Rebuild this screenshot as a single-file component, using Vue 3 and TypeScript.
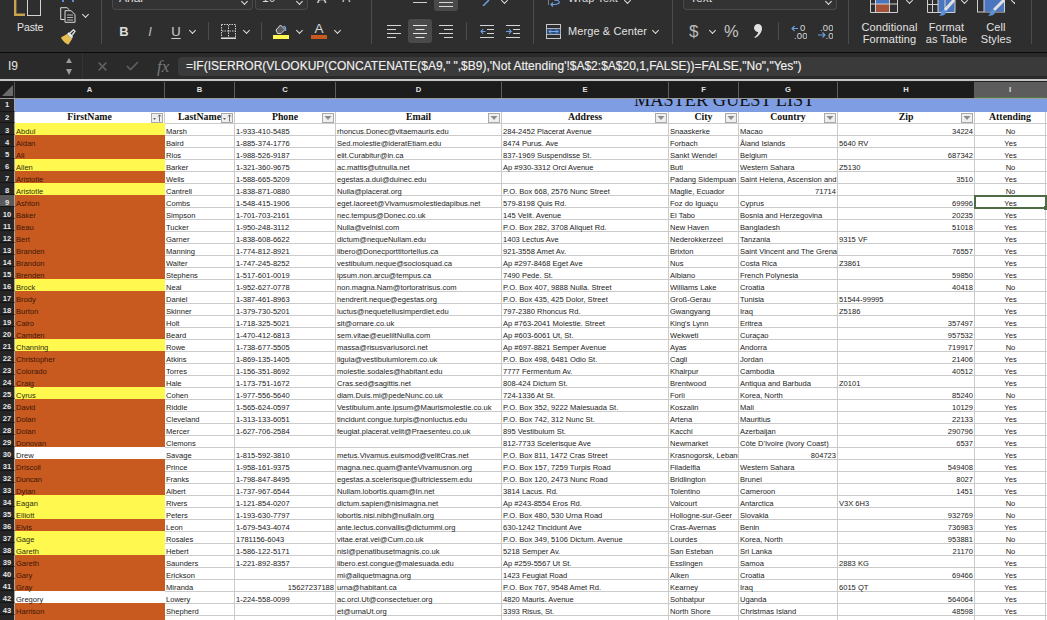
<script setup lang="ts">
type Fill = 'o' | 'y' | 'w'
type Row = [number, Fill, string, string, string, string, string, string, string, string, string]

const formula = `=IF(ISERROR(VLOOKUP(CONCATENATE($A9," ",$B9),'Not Attending'!$A$2:$A$20,1,FALSE))=FALSE,"No","Yes")`
const columns = ['A', 'B', 'C', 'D', 'E', 'F', 'G', 'H', 'I']
const headers: { label: string; kind: 'sort' | 'filter' | 'none' }[] = [
  { label: 'FirstName', kind: 'sort' },
  { label: 'LastName', kind: 'sort' },
  { label: 'Phone', kind: 'filter' },
  { label: 'Email', kind: 'filter' },
  { label: 'Address', kind: 'filter' },
  { label: 'City', kind: 'filter' },
  { label: 'Country', kind: 'filter' },
  { label: 'Zip', kind: 'filter' },
  { label: 'Attending', kind: 'none' }
]

const rows: Row[] = [
  [3, 'y', 'Abdul', 'Marsh', '1-933-410-5485', 'rhoncus.Donec@vitaemauris.edu', '284-2452 Placerat Avenue', 'Snaaskerke', 'Macao', '34224', 'No'],
  [4, 'o', 'Aidan', 'Baird', '1-885-374-1776', 'Sed.molestie@ideratEtiam.edu', '8474 Purus. Ave', 'Forbach', 'Åland Islands', '5640 RV', 'Yes'],
  [5, 'o', 'Ali', 'Rios', '1-988-526-9187', 'elit.Curabitur@in.ca', '837-1969 Suspendisse St.', 'Sankt Wendel', 'Belgium', '687342', 'Yes'],
  [6, 'y', 'Allen', 'Barker', '1-321-360-9675', 'ac.mattis@utnulla.net', 'Ap #930-3312 Orci Avenue', 'Buti', 'Western Sahara', 'Z5130', 'No'],
  [7, 'o', 'Aristotle', 'Wells', '1-588-665-5209', 'egestas.a.dui@duinec.edu', '', 'Padang Sidempuan', 'Saint Helena, Ascension and', '3510', 'Yes'],
  [8, 'y', 'Aristotle', 'Cantrell', '1-838-871-0880', 'Nulla@placerat.org', 'P.O. Box 668, 2576 Nunc Street', 'Maglie, Ecuador', '71714', '', 'No'],
  [9, 'o', 'Ashton', 'Combs', '1-548-415-1906', 'eget.laoreet@Vivamusmolestiedapibus.net', '579-8198 Quis Rd.', 'Foz do Iguaçu', 'Cyprus', '69996', 'Yes'],
  [10, 'o', 'Baker', 'Simpson', '1-701-703-2161', 'nec.tempus@Donec.co.uk', '145 Velit. Avenue', 'El Tabo', 'Bosnia and Herzegovina', '20235', 'Yes'],
  [11, 'o', 'Beau', 'Tucker', '1-950-248-3112', 'Nulla@velnisl.com', 'P.O. Box 282, 3708 Aliquet Rd.', 'New Haven', 'Bangladesh', '51018', 'Yes'],
  [12, 'o', 'Bert', 'Garner', '1-838-608-6622', 'dictum@nequeNullam.edu', '1403 Lectus Ave', 'Nederokkerzeel', 'Tanzania', '9315 VF', 'Yes'],
  [13, 'o', 'Branden', 'Manning', '1-774-812-8921', 'libero@Donecporttitortellus.ca', '921-3558 Amet Av.', 'Brixton', 'Saint Vincent and The Grenadines', '76557', 'Yes'],
  [14, 'o', 'Brandon', 'Walter', '1-747-245-8252', 'vestibulum.neque@sociosquad.ca', 'Ap #297-8468 Eget Ave', 'Nus', 'Costa Rica', 'Z3861', 'Yes'],
  [15, 'o', 'Brenden', 'Stephens', '1-517-601-0019', 'ipsum.non.arcu@tempus.ca', '7490 Pede. St.', 'Albiano', 'French Polynesia', '59850', 'Yes'],
  [16, 'y', 'Brock', 'Neal', '1-952-627-0778', 'non.magna.Nam@tortoratrisus.com', 'P.O. Box 407, 9888 Nulla. Street', 'Williams Lake', 'Croatia', '40418', 'No'],
  [17, 'o', 'Brody', 'Daniel', '1-387-461-8963', 'hendrerit.neque@egestas.org', 'P.O. Box 435, 425 Dolor, Street', 'Groß-Gerau', 'Tunisia', '51544-99995', 'Yes'],
  [18, 'o', 'Burton', 'Skinner', '1-379-730-5201', 'luctus@nequetellusimperdiet.edu', '797-2380 Rhoncus Rd.', 'Gwangyang', 'Iraq', 'Z5186', 'Yes'],
  [19, 'o', 'Cairo', 'Holt', '1-718-325-5021', 'sit@ornare.co.uk', 'Ap #763-2041 Molestie. Street', "King's Lynn", 'Eritrea', '357497', 'Yes'],
  [20, 'o', 'Camden', 'Beard', '1-470-412-6813', 'sem.vitae@eueliltNulla.com', 'Ap #603-6061 Ut, St.', 'Wekweti', 'Curaçao', '957532', 'Yes'],
  [21, 'y', 'Channing', 'Rowe', '1-738-677-5505', 'massa@risusvariusorci.net', 'Ap #697-8821 Semper Avenue', 'Ayas', 'Andorra', '719917', 'No'],
  [22, 'o', 'Christopher', 'Atkins', '1-869-135-1405', 'ligula@vestibulumlorem.co.uk', 'P.O. Box 498, 6481 Odio St.', 'Cagli', 'Jordan', '21406', 'Yes'],
  [23, 'o', 'Colorado', 'Torres', '1-156-351-8692', 'molestie.sodales@habitant.edu', '7777 Fermentum Av.', 'Khairpur', 'Cambodia', '40512', 'Yes'],
  [24, 'o', 'Craig', 'Hale', '1-173-751-1672', 'Cras.sed@sagittis.net', '808-424 Dictum St.', 'Brentwood', 'Antiqua and Barbuda', 'Z0101', 'Yes'],
  [25, 'y', 'Cyrus', 'Cohen', '1-977-556-5640', 'diam.Duis.mi@pedeNunc.co.uk', '724-1336 At St.', 'Forlì', 'Korea, North', '85240', 'No'],
  [26, 'o', 'David', 'Riddle', '1-565-624-0597', 'Vestibulum.ante.ipsum@Maurismolestie.co.uk', 'P.O. Box 352, 9222 Malesuada St.', 'Koszalin', 'Mali', '10129', 'Yes'],
  [27, 'o', 'Dolan', 'Cleveland', '1-313-133-6051', 'tincidunt.congue.turpis@nonluctus.edu', 'P.O. Box 742, 312 Nunc St.', 'Artena', 'Mauritius', '22133', 'Yes'],
  [28, 'o', 'Dolan', 'Mercer', '1-627-706-2584', 'feugiat.placerat.velit@Praesenteu.co.uk', '895 Vestibulum St.', 'Kacchi', 'Azerbaijan', '290796', 'Yes'],
  [29, 'o', 'Donovan', 'Clemons', '', '', '812-7733 Scelerisque Ave', 'Newmarket', "Côte D'Ivoire (Ivory Coast)", '6537', 'Yes'],
  [30, 'w', 'Drew', 'Savage', '1-815-592-3810', 'metus.Vivamus.euismod@velitCras.net', 'P.O. Box 811, 1472 Cras Street', 'Krasnogorsk, Lebanon', '804723', '', 'Yes'],
  [31, 'o', 'Driscoll', 'Prince', '1-958-161-9375', 'magna.nec.quam@anteVivamusnon.org', 'P.O. Box 157, 7259 Turpis Road', 'Filadelfia', 'Western Sahara', '549408', 'Yes'],
  [32, 'o', 'Duncan', 'Franks', '1-798-847-8495', 'egestas.a.scelerisque@ultriciessem.edu', 'P.O. Box 120, 2473 Nunc Road', 'Bridlington', 'Brunei', '8027', 'Yes'],
  [33, 'o', 'Dylan', 'Albert', '1-737-967-6544', 'Nullam.lobortis.quam@In.net', '3814 Lacus. Rd.', 'Tolentino', 'Cameroon', '1451', 'Yes'],
  [34, 'y', 'Eagan', 'Rivers', '1-121-854-0207', 'dictum.sapien@nisimagna.net', 'Ap #243-8554 Eros Rd.', 'Valcourt', 'Antarctica', 'V3X 6H3', 'No'],
  [35, 'y', 'Elliott', 'Peters', '1-193-630-7797', 'lobortis.nisi.nibh@nullaIn.org', 'P.O. Box 480, 530 Urna Road', 'Hollogne-sur-Geer', 'Slovakia', '932769', 'No'],
  [36, 'o', 'Elvis', 'Leon', '1-679-543-4074', 'ante.lectus.convallis@dictummi.org', '630-1242 Tincidunt Ave', 'Cras-Avernas', 'Benin', '736983', 'Yes'],
  [37, 'y', 'Gage', 'Rosales', '1781156-6043', 'vitae.erat.vel@Cum.co.uk', 'P.O. Box 349, 5106 Dictum. Avenue', 'Lourdes', 'Korea, North', '953881', 'No'],
  [38, 'y', 'Gareth', 'Hebert', '1-586-122-5171', 'nisl@penatibusetmagnis.co.uk', '5218 Semper Av.', 'San Esteban', 'Sri Lanka', '21170', 'No'],
  [39, 'o', 'Gareth', 'Saunders', '1-221-892-8357', 'libero.est.congue@malesuada.edu', 'Ap #259-5567 Ut St.', 'Esslingen', 'Samoa', '2883 KG', 'Yes'],
  [40, 'o', 'Gary', 'Erickson', '', 'mi@aliquetmagna.org', '1423 Feugiat Road', 'Alken', 'Croatia', '69466', 'Yes'],
  [41, 'o', 'Gray', 'Miranda', '15627237188', 'urna@habitant.ca', 'P.O. Box 767, 9548 Amet Rd.', 'Kearney', 'Iraq', '6015 QT', 'Yes'],
  [42, 'w', 'Gregory', 'Lowery', '1-224-558-0099', 'ac.orci.Ut@consectetuer.org', '4820 Mauris. Avenue', 'Sohbatpur', 'Uganda', '564064', 'Yes'],
  [43, 'o', 'Harrison', 'Shepherd', '', 'et@urnaUt.org', '3393 Risus, St.', 'North Shore', 'Christmas Island', '48598', 'Yes']
]

const isNumber = (v: string): boolean => /^\d+$/.test(v)
</script>

<template>
  <div class="app">
    <div class="ribbon">
      <div class="grp g-clip">
        <div class="paste">
          <svg class="paste-ico" width="28" height="16" viewBox="0 0 28 16">
            <path d="M1.2 0V14.8H11" fill="none" stroke="#c9a14f" stroke-width="2.4" />
            <rect x="13.5" y="-2" width="13" height="17.5" fill="none" stroke="#d4d4d4" />
          </svg>
          <span class="paste-label">Paste</span>
        </div>
        <div class="clip-tools">
          <svg width="12" height="2" viewBox="0 0 12 2" class="cut"><path d="M1 0V2M11 0V2" stroke="#5d8fd8" stroke-width="2" /></svg>
          <div class="copy-row">
            <svg width="16" height="16" viewBox="0 0 16 16">
              <path d="M4.5 12.5H.7V.7H7L9.5 3M5 3.7H11L15 7.5V15.3H5Z" fill="none" stroke="#d8d8d8" />
              <path d="M7 8H13M7 10.5H13M7 13H13" stroke="#d8d8d8" stroke-width=".8" />
            </svg>
            <i class="chev copy-chev"></i>
          </div>
          <svg class="brush" width="16" height="16" viewBox="0 0 16 16">
            <path d="M1 8.5 7 5 12 10 8.5 15.5C6 15 2.5 12 1 8.5Z" fill="#e7bd52" />
            <path d="M7 5 9 3 13 7 12 10Z" fill="#e8e8e8" />
            <path d="M10 4 13.5 .8 15 2.3 12.2 6" fill="none" stroke="#e8e8e8" stroke-width="1.3" />
          </svg>
        </div>
      </div>

      <div class="grp g-font">
        <div class="top">
          <div class="selbox font-box"><span>Arial</span><i class="chev"></i></div>
          <div class="selbox size-box"><span>10</span><i class="chev"></i></div>
          <span class="clipped grow-a">A</span>
          <span class="clipped shrink-a">A</span>
        </div>
        <div class="bot">
          <span class="t-b">B</span>
          <span class="t-i">I</span>
          <span class="t-u">U</span>
          <i class="chev c-u"></i>
          <i class="sep s-1"></i>
          <svg class="borders" width="15" height="15" viewBox="0 0 15 15">
            <path d="M.5 .5H14.5V13M.5 .5V13" fill="none" stroke="#cfcfcf" stroke-dasharray="1.5 1" />
            <path d="M7.5 1V13M1 7H14" stroke="#cfcfcf" stroke-dasharray="1.5 1" />
            <path d="M0 14.2H15" stroke="#f2f2f2" stroke-width="1.4" />
          </svg>
          <i class="chev c-b"></i>
          <i class="sep s-2"></i>
          <svg class="fill" width="16" height="16" viewBox="0 0 16 16">
            <path d="M3 7 7.5 2 12 6.5 8 10.5H4.5Z" fill="#5c5c5c" stroke="#dcdcdc" />
            <path d="M12.5 8V5C12.5 3.5 11 3 10.5 4" fill="none" stroke="#6d9fe0" stroke-width="1.4" />
            <rect x="0" y="12" width="16" height="4" fill="#fff84f" />
          </svg>
          <i class="chev c-f"></i>
          <div class="color-a"><span>A</span><i></i></div>
          <i class="chev c-a"></i>
        </div>
      </div>

      <div class="grp g-align">
        <div class="top">
          <svg class="a-top1" width="14" height="8" viewBox="0 0 14 8"><path d="M0 2.5H14" stroke="#cfcfcf" /></svg>
          <div class="a-top2"><svg width="14" height="8" viewBox="0 0 14 8"><path d="M0 2.5H14M0 6.5H14" stroke="#d8d8d8" /></svg></div>
          <svg class="orient" width="12" height="6" viewBox="0 0 12 6"><path d="M9 0 3 6" stroke="#6d9fe0" stroke-width="1.5" /></svg>
          <i class="chev c-or"></i>
        </div>
        <div class="bot">
          <svg class="al-l" width="14" height="13" viewBox="0 0 14 13"><path d="M0 .5H14M0 4.5H9M0 8.5H14M0 12.5H9" stroke="#d4d4d4" /></svg>
          <div class="al-c"><svg width="14" height="13" viewBox="0 0 14 13"><path d="M0 .5H14M2.5 4.5H11.5M0 8.5H14M2.5 12.5H11.5" stroke="#e4e4e4" /></svg></div>
          <svg class="al-r" width="14" height="13" viewBox="0 0 14 13"><path d="M0 .5H14M5 4.5H14M0 8.5H14M5 12.5H14" stroke="#d4d4d4" /></svg>
          <i class="sep s-3"></i>
          <svg class="ind-d" width="14" height="13" viewBox="0 0 14 13">
            <path d="M0 .5H14M7 4.5H14M7 8.5H14M0 12.5H14" stroke="#d4d4d4" />
            <path d="M5.5 6.5H1M3.2 4.2 1 6.5 3.2 8.8" fill="none" stroke="#6d9fe0" stroke-width="1.1" />
          </svg>
          <svg class="ind-i" width="14" height="13" viewBox="0 0 14 13">
            <path d="M0 .5H14M7 4.5H14M7 8.5H14M0 12.5H14" stroke="#d4d4d4" />
            <path d="M0 6.5H5M3 4.2 5.2 6.5 3 8.8" fill="none" stroke="#6d9fe0" stroke-width="1.1" />
          </svg>
        </div>
      </div>

      <div class="grp g-wrap">
        <div class="top">
          <svg class="wrap-ico" width="14" height="7" viewBox="0 0 14 7">
            <path d="M6 0C13 0 13 4.5 6 4.5H3M5 2.5 3 4.5 5 6.5" fill="none" stroke="#6d9fe0" stroke-width="1.1" />
            <path d="M0 5V0" stroke="#d4d4d4" />
          </svg>
          <span class="clipped wrap-txt">Wrap Text</span>
          <i class="chev c-wr"></i>
        </div>
        <div class="bot">
          <svg class="merge-ico" width="15" height="15" viewBox="0 0 15 15">
            <rect x=".5" y=".5" width="14" height="14" fill="none" stroke="#c9c9c9" />
            <path d="M0 4.5H15M0 10.5H15" stroke="#c9c9c9" />
            <path d="M.8 4.8H14.2V10.2H.8Z" fill="#2d4f7e" />
            <path d="M3 7.5H12M5 5.5 3 7.5 5 9.5M10 5.5 12 7.5 10 9.5" fill="none" stroke="#7ea8e6" />
          </svg>
          <span class="lbl merge-txt">Merge &amp; Center</span>
          <i class="chev c-m"></i>
        </div>
      </div>

      <div class="grp g-num">
        <div class="top">
          <div class="selbox num-box"><span>Text</span><i class="chev"></i></div>
        </div>
        <div class="bot">
          <span class="dollar">$</span>
          <i class="chev c-d"></i>
          <span class="percent">%</span>
          <svg class="comma" width="8" height="14" viewBox="0 0 8 14">
            <path d="M4 0C6.4 0 8 1.7 8 4.2 8 8 5.2 12 1 14L.4 13C2.6 11.600 4 9.800 4.300 8 2 8 0 6.300 0 4 0 1.700 1.800 0 4 0Z" fill="#e2e2e2" />
          </svg>
          <i class="sep s-4"></i>
          <svg class="dec-up" width="16" height="15" viewBox="0 0 16 15">
            <path d="M7 4.5H1M3.5 2 1 4.5 3.5 7" fill="none" stroke="#6d9fe0" stroke-width="1.1" />
            <text x="9" y="7" class="dec-t">0</text>
            <text x="3" y="15" class="dec-t">.00</text>
          </svg>
          <svg class="dec-dn" width="15" height="15" viewBox="0 0 15 15">
            <text x="2" y="7" class="dec-t">.00</text>
            <path d="M0 11H7M4.5 8.5 7 11 4.5 13.5" fill="none" stroke="#6d9fe0" stroke-width="1.1" />
            <text x="7.5" y="15" class="dec-t">.0</text>
          </svg>
        </div>
      </div>

      <div class="grp g-style">
        <div class="st st-cf">
          <div class="st-ico">
            <svg class="cf-ico" width="28" height="13" viewBox="0 0 28 13">
              <rect x="5.5" y="0" width="14" height="4" fill="#4a76c0" />
              <rect x="5" y="4" width="15" height="8" fill="#a4523a" />
              <path d="M.5 0V12.5H27.5V0M5.5 0V12.5M19.5 0V12.5M.5 4H27.5" fill="none" stroke="#cfcfcf" />
            </svg>
            <i class="chev c-cf"></i>
          </div>
          <span class="lbl">Conditional</span>
          <span class="lbl">Formatting</span>
        </div>
        <div class="st st-ft">
          <div class="st-ico">
            <svg width="29" height="17" viewBox="0 0 29 17">
              <rect x="11" y="0" width="17" height="12" fill="#4a76c0" />
              <path d="M.5 0V12.5H28V0M5.5 0V12.5M11 0V12.5M18 0V12.5M.5 4.5H11" fill="none" stroke="#cfcfcf" />
              <path d="M18 10 27 0" stroke="#e0e0e0" stroke-width="3" />
              <path d="M15 10.5C18 9 20 11 19 13 17.5 16 14 16 12 15.5 14.5 14.5 14 12 15 10.5Z" fill="#5c92d8" />
            </svg>
            <i class="chev c-ft"></i>
          </div>
          <span class="lbl">Format</span>
          <span class="lbl">as Table</span>
        </div>
        <div class="st st-cs">
          <div class="st-ico">
            <svg width="30" height="17" viewBox="0 0 30 17">
              <rect x=".5" y="-1" width="27" height="13" fill="none" stroke="#cfcfcf" />
              <rect x="7" y="0" width="20" height="11.5" fill="#4a76c0" />
              <path d="M7 0V12" stroke="#cfcfcf" />
              <path d="M17 10 27 0" stroke="#e0e0e0" stroke-width="3" />
              <path d="M14 10.5C17 9 19 11 18 13 16.5 16 13 16 11 15.5 13.5 14.5 13 12 14 10.5Z" fill="#5c92d8" />
            </svg>
            <i class="chev c-cs"></i>
          </div>
          <span class="lbl">Cell</span>
          <span class="lbl">Styles</span>
        </div>
      </div>
    </div>

    <div class="fbar">
      <div class="namebox">
        <span>I9</span>
        <div class="spin"><i class="tri-u"></i><i class="tri-d"></i></div>
      </div>
      <svg class="x-ico" width="9" height="9" viewBox="0 0 9 9"><path d="M.7 .7 8.3 8.3M8.3 .7 .7 8.3" stroke="#5e5e5e" stroke-width="1.7" /></svg>
      <svg class="ok-ico" width="13" height="10" viewBox="0 0 13 10"><path d="M1 5 4.5 8.500 12 1" fill="none" stroke="#5e5e5e" stroke-width="1.7" /></svg>
      <span class="fx">fx</span>
      <div class="finput">{{ formula }}</div>
    </div>
    <div class="fsep"></div>

    <div class="sheet">
      <div class="cols head">
        <div class="corner"><svg width="11" height="11" viewBox="0 0 11 11"><path d="M11 0V11H0Z" fill="#6a6a6a" /></svg></div>
        <div v-for="c in columns" :key="c" class="ch" :class="{ 'ch-sel': c === 'I' }">{{ c }}</div>
        <div class="ch"></div>
      </div>

      <div class="cols row1">
        <div class="rn">1</div>
        <div class="title">MASTER GUEST LIST</div>
      </div>

      <div class="cols row2">
        <div class="rn">2</div>
        <div v-for="h in headers" :key="h.label" class="hcell">
          {{ h.label }}
          <span v-if="h.kind !== 'none'" class="fbtn">
            <svg v-if="h.kind === 'sort'" width="10" height="8" viewBox="0 0 10 8">
              <path d="M1 4H4L2.5 6Z" fill="#666" />
              <path d="M7.5 7.500V1M6 2.500 7.500 .8 9 2.500" fill="none" stroke="#555" stroke-width=".8" />
            </svg>
            <svg v-else width="8" height="6" viewBox="0 0 8 6"><path d="M.5 1H7.500L4 5Z" fill="#8c8c8c" /></svg>
          </span>
        </div>
        <div></div>
      </div>

      <div v-for="r in rows" :key="r[0]" class="cols drow">
        <div class="rn" :class="{ 'rn-sel': r[0] === 9 }">{{ r[0] }}</div>
        <div class="cell first" :class="`f-${r[1]}`"><span class="tx">{{ r[2] }}</span></div>
        <div class="cell"><span class="tx">{{ r[3] }}</span></div>
        <div class="cell" :class="{ right: isNumber(r[4]) }"><span class="tx">{{ r[4] }}</span></div>
        <div class="cell"><span class="tx">{{ r[5] }}</span></div>
        <div class="cell"><span class="tx">{{ r[6] }}</span></div>
        <div class="cell"><span class="tx">{{ r[7] }}</span></div>
        <div class="cell" :class="{ right: isNumber(r[8]) }"><span class="tx">{{ r[8] }}</span></div>
        <div class="cell" :class="{ right: isNumber(r[9]) }"><span class="tx">{{ r[9] }}</span></div>
        <div class="cell center" :class="{ sel: r[0] === 9 }"><span class="tx">{{ r[10] }}</span></div>
        <div class="cell"></div>
      </div>

      <div class="cols drow">
        <div class="rn"></div>
        <div class="cell first f-o"></div>
        <div v-for="n in 9" :key="n" class="cell"></div>
      </div>
    </div>
  </div>
</template>

<style>
html, body { margin: 0; background: #fff; overflow: hidden; }
</style>

<style scoped>
.app { width: 1047px; height: 620px; overflow: hidden; font-family: "Liberation Sans", Arial, sans-serif; }

/* ribbon */
.ribbon { display: flex; height: 52px; background: #2e2e2e; color: #e0e0e0; border-bottom: 1px solid #0c0c0c; overflow: hidden; }
.grp { height: 44px; box-sizing: border-box; border-right: 1px solid #4c4c4c; flex: none; }
.g-clip { width: 102px; display: flex; }
.g-font { width: 270px; }
.g-align { width: 162px; }
.g-wrap { width: 139px; }
.g-num { width: 176px; }
.g-style { width: 183px; display: flex; }
.top { height: 11px; display: flex; align-items: flex-start; overflow: hidden; }
.bot { height: 24px; margin-top: 8px; display: flex; align-items: center; }
.chev { display: block; flex: none; width: 5px; height: 5px; box-sizing: border-box; border-right: 1.5px solid #e0e0e0; border-bottom: 1.5px solid #e0e0e0; transform: rotate(45deg); }
.sep { display: block; flex: none; width: 1px; height: 18px; background: #4c4c4c; }
.lbl { display: block; font-size: 11px; line-height: 12px; letter-spacing: .1px; color: #e2e2e2; white-space: nowrap; }
.clipped { font-size: 12px; line-height: 12px; margin-top: -8px; color: #dcdcdc; }

.paste { width: 60px; flex: none; }
.paste-ico { display: block; margin-left: 14px; }
.paste-label { display: block; margin: 6px 0 0 17px; font-size: 10.5px; line-height: 11px; letter-spacing: -.1px; color: #e4e4e4; }
.clip-tools { flex: none; }
.cut { display: block; margin-left: 2px; }
.copy-row { display: flex; align-items: center; margin-top: 5px; height: 16px; }
.copy-chev { margin: -1px 0 0 7px; }
.brush { display: block; margin-top: 6px; }

.selbox { height: 10px; box-sizing: border-box; border: 1px solid #4a4a4a; border-top: 0; border-radius: 0 0 4px 4px; background: #333; display: flex; justify-content: space-between; align-items: flex-start; overflow: hidden; flex: none; }
.selbox span { font-size: 12px; line-height: 12px; margin: -8px 0 0 6px; color: #dcdcdc; }
.selbox .chev { margin: -1px 5px 0 0; }
.font-box { width: 141px; margin-left: 10px; }
.size-box { width: 53px; margin-left: 2px; }
.grow-a { margin-left: 9px; font-size: 14px; }
.shrink-a { margin-left: 16px; }

.t-b { margin-left: 16px; width: 12px; text-align: center; font: bold 13px/1 "Liberation Sans", sans-serif; color: #dcdcdc; }
.t-i { margin-left: 15px; width: 10px; text-align: center; font: italic 13px/1 "Liberation Sans", sans-serif; color: #bcbcbc; }
.t-u { margin-left: 15px; width: 12px; text-align: center; font: 13px/1 "Liberation Sans", sans-serif; color: #cfcfcf; text-decoration: underline; text-underline-offset: 2px; }
.c-u { margin-left: 8px; margin-top: -2px; }
.s-1 { margin-left: 13px; }
.borders { margin-left: 12px; flex: none; }
.c-b { margin-left: 8px; margin-top: -2px; }
.s-2 { margin-left: 12px; }
.fill { margin-left: 11px; flex: none; }
.c-f { margin-left: 8px; margin-top: -2px; }
.color-a { margin-left: 9px; width: 16px; flex: none; height: 16px; display: flex; flex-direction: column; align-items: center; }
.color-a span { font-size: 13.5px; line-height: 12px; color: #d8d8d8; }
.color-a i { display: block; width: 16px; height: 4px; background: #c85a20; }
.c-a { margin-left: 8px; margin-top: -2px; }

.a-top1 { margin-left: 41px; flex: none; }
.a-top2 { margin-left: 7px; width: 24px; height: 11px; background: #4a4a4a; border-radius: 0 0 3px 3px; display: flex; justify-content: center; flex: none; }
.orient { margin-left: 22px; flex: none; }
.c-or { margin-left: 10px; margin-top: -2px; }
.al-l { margin-left: 15px; flex: none; }
.al-c { margin-left: 7px; width: 24px; height: 24px; background: #4a4a4a; border-radius: 3px; display: flex; align-items: center; justify-content: center; flex: none; }
.al-r { margin-left: 7px; flex: none; }
.s-3 { margin-left: 13px; }
.ind-d { margin-left: 13px; flex: none; }
.ind-i { margin-left: 12px; flex: none; }

.wrap-ico { margin-left: 14px; flex: none; }
.wrap-txt { margin-left: 6px; font-size: 11px; letter-spacing: .1px; margin-top: -8px; white-space: nowrap; }
.c-wr { margin-left: 7px; margin-top: -2px; }
.merge-ico { margin-left: 12px; flex: none; }
.merge-txt { margin-left: 7px; }
.c-m { margin-left: 6px; margin-top: -2px; }

.num-box { width: 154px; margin-left: 10px; }
.dollar { margin-left: 16px; width: 10px; font-size: 17px; line-height: 1; color: #bcbcbc; }
.c-d { margin-left: 11px; margin-top: -2px; }
.percent { margin-left: 9px; width: 15px; font-size: 16.5px; line-height: 1; color: #c4c4c4; letter-spacing: -1px; }
.comma { margin-left: 15px; flex: none; }
.s-4 { margin-left: 16px; }
.dec-up { margin-left: 12px; flex: none; }
.dec-dn { margin-left: 11px; flex: none; }
.dec-t { font: 9.5px "Liberation Sans", sans-serif; fill: #d8d8d8; letter-spacing: .2px; }

.st { flex: none; text-align: center; }
.st-ico { height: 21px; display: flex; align-items: flex-start; overflow: hidden; }
.st-ico svg { flex: none; display: block; }
.st-cf { width: 61px; margin-left: 10px; }
.st-cf .st-ico { padding-left: 11px; }
.c-cf { margin-left: 9px; margin-top: -2px; }
.st-ft { width: 43px; margin-left: 5px; }
.st-ft .st-ico { padding-left: 2px; }
.c-ft { margin-left: 6px; margin-top: -2px; }
.st-cs { width: 38px; margin-left: 9px; }
.c-cs { margin-left: 5px; margin-top: -2px; }

/* formula bar */
.fbar { height: 26px; display: flex; align-items: center; background: #2a2a2a; box-sizing: border-box; }
.namebox { width: 83px; height: 26px; flex: none; display: flex; align-items: center; justify-content: space-between; box-sizing: border-box; border-right: 1px solid #333; padding: 0 10px 0 8px; font-size: 12px; color: #e4e4e4; }
.spin { display: flex; flex-direction: column; gap: 6px; }
.tri-u { display: block; width: 0; border: 3.5px solid transparent; border-top: 0; border-bottom: 5px solid #9c9c9c; }
.tri-d { display: block; width: 0; border: 3.5px solid transparent; border-bottom: 0; border-top: 6px solid #9c9c9c; }
.x-ico { margin-left: 15px; flex: none; }
.ok-ico { margin-left: 19px; flex: none; }
.fx { margin-left: 18px; width: 21px; flex: none; font: italic 17px/1 "Liberation Serif", serif; color: #777; }
.finput { flex: 1; height: 19px; background: #3a3a3a; border-radius: 4px 0 0 4px; padding-left: 8px; font-size: 12px; line-height: 19px; color: #f0f0f0; white-space: nowrap; overflow: hidden; -webkit-text-stroke: .15px #f0f0f0; }
.fsep { height: 3px; background: linear-gradient(#c4c4c4 0 2px, #222 2px); }

/* sheet */
.sheet { background: #fff; }
.cols { display: grid; grid-template-columns: 15px 150px 70px 101px 166px 167px 70px 99px 137px 71px 1fr; }
.head { height: 17px; background: #1c1c1c; box-sizing: border-box; border-bottom: 1px solid #9c9c9c; }
.corner { display: flex; align-items: center; justify-content: flex-end; padding: 0 1.5px 0 0; box-sizing: border-box; border-right: 1px solid #555; }
.ch { font-size: 7.6px; line-height: 16px; text-align: center; color: #e4e4e4; font-weight: bold; box-sizing: border-box; border-right: 1px solid #5c5c5c; }
.ch-sel { background: #5c5c5c; border-bottom: 1px solid #4f7a4a; line-height: 15px; height: 16px; }
.rn { background: #262626; color: #e4e4e4; font-size: 7.6px; font-weight: bold; text-align: center; box-sizing: border-box; border-right: 1.5px solid #a8a8a8; border-bottom: 1px solid #151515; overflow: hidden; line-height: 10px; padding-top: 3px; }
.rn-sel { background: #5a5a5a; }
.row1 { height: 13px; background: #7f9de3; overflow: hidden; }
.row1 .rn { padding-top: 1px; }
.title { grid-column: 2 / -1; padding-left: 619px; font: 18.3px/3px "Liberation Serif", serif; color: #111; white-space: nowrap; overflow: hidden; height: 13px; }
.row2 { height: 11px; }
.row2 .rn { padding-top: 1px; }
.hcell { position: relative; font: bold 9.8px/10px "Liberation Serif", serif; color: #111; text-align: center; box-sizing: border-box; border-right: 1px solid #c9c9c9; white-space: nowrap; }
.fbtn { position: absolute; right: 1px; top: .5px; width: 12px; height: 10px; box-sizing: border-box; border: 1px solid #a9a9a9; background: #efefef; display: flex; align-items: center; justify-content: center; }
.fbtn svg { display: block; }
.drow { height: 12px; }
.cell { box-sizing: border-box; height: 12px; border-top: 1px solid #cbcbcb; border-right: 1px solid #cbcbcb; padding: 3px 0 0 1px; font-size: 7.55px; line-height: 9px; color: #222; white-space: nowrap; overflow-x: clip; overflow-y: visible; }
.tx { position: relative; }
.first { border: 0; padding-top: 4px; color: #3b1606; }
.f-o { background: #c85a20; }
.f-y { background: #fff84f; color: #2e2e10; }
.f-w { background: #fff; color: #222; }
.right { text-align: right; padding: 3px 1px 0 0; }
.center { text-align: center; }
.sel { position: relative; overflow: visible; z-index: 1; }
.sel::before { content: ""; position: absolute; left: -1px; top: -1px; right: -2px; bottom: -2px; border: 2px solid #4e6b46; box-sizing: border-box; }
.sel::after { content: ""; position: absolute; right: -3px; bottom: -3px; width: 4px; height: 4px; background: #4e6b46; }
</style>
